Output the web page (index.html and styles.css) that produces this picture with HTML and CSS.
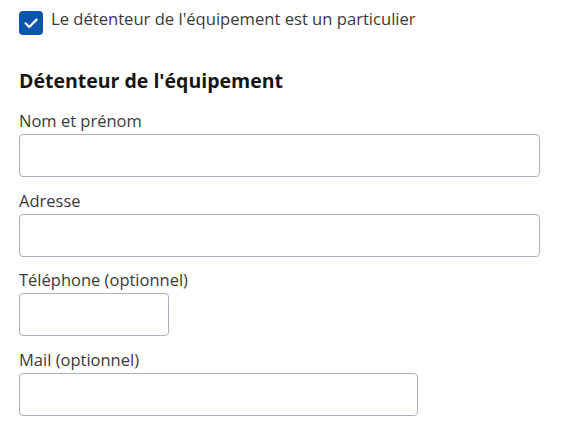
FILE: index.html
```html
<!DOCTYPE html>
<html lang="fr">
<head>
<meta charset="utf-8">
<link rel="stylesheet" href="styles.css">
</head>
<body>
<div class="page">
  <label class="check-row">
    <span class="checkbox">
      <svg width="24" height="24" viewBox="0 0 24 24"><path d="M6.5 12.3 L10.2 16 L17.6 8.6" fill="none" stroke="#fff" stroke-width="2.2" stroke-linecap="round" stroke-linejoin="round"/></svg>
    </span>
    <span class="check-label">Le détenteur de l'équipement est un particulier</span>
  </label>

  <h2 class="title">Détenteur de l'équipement</h2>

  <div class="fields">
    <div class="field">
      <label class="label">Nom et prénom</label>
      <div class="input full"></div>
    </div>
    <div class="field">
      <label class="label">Adresse</label>
      <div class="input full"></div>
    </div>
    <div class="field">
      <label class="label">Téléphone (optionnel)</label>
      <div class="input small"></div>
    </div>
    <div class="field">
      <label class="label">Mail (optionnel)</label>
      <div class="input medium"></div>
    </div>
  </div>
</div>
</body>
</html>
```

FILE: styles.css
```css
html, body {
  margin: 0;
  padding: 0;
  background: #fff;
}
body {
  font-family: "Open Sans", "Liberation Sans", sans-serif;
  color: #3a3a3a;
}
.page {
  padding: 11px 19px 0 19px;
}
.check-row {
  display: flex;
  align-items: flex-start;
  gap: 8px;
  height: 24px;
}
.checkbox {
  width: 24px;
  height: 24px;
  border-radius: 4px;
  background: #0b55b1;
  display: flex;
  flex: none;
}
.check-label {
  font-size: 16.6px;
  line-height: 18px;
  margin-top: -1px;
  color: #3a3a3a;
}
.title {
  margin: 32px 0 0 0;
  font-size: 19.5px;
  line-height: 28px;
  font-weight: 700;
  color: #161616;
}
.fields {
  margin-top: 14px;
  display: flex;
  flex-direction: column;
  gap: 11.7px;
}
.field {
  display: flex;
  flex-direction: column;
}
.label {
  font-size: 16.5px;
  line-height: 24px;
  margin-bottom: 1px;
}
.input {
  height: 41px;
  border: 1px solid #a7b1c1;
  border-radius: 4px;
  box-sizing: content-box;
}
.full { width: 519px; }
.small { width: 148px; }
.medium { width: 397px; }
```
